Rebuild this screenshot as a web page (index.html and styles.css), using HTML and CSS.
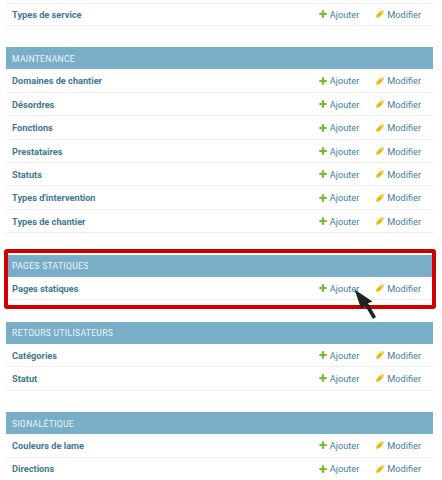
FILE: index.html
```
<!DOCTYPE html>
<html lang="fr">
<head>
<meta charset="utf-8">
<title>Administration</title>
<link rel="stylesheet" href="styles.css">
</head>
<body>
<svg class="defs" aria-hidden="true">
  <symbol id="add" viewBox="0 0 8 8"><path d="M2.9.3h2.2v2.6h2.6v2.2H5.1v2.6H2.9V5.1H.3V2.9h2.6z" fill="#70bf2b"/></symbol>
  <symbol id="edit" viewBox="0 0 8 8"><path d="M.2 7.8.6 5 4.6 1 7 3.4 3 7.4zM5.1.6Q6-.3 6.9.5L7.5 1.1Q8.3 2 7.4 2.9z" fill="#efb80b"/></symbol>
</svg>
<main class="apps" id="apps"></main>
<script src="app.js"></script>
</body>
</html>
```
FILE: styles.css
```
* { box-sizing: border-box; }
body {
  margin: 0;
  height: 480px;
  overflow: hidden;
  background: #fff;
  color: #447e9b;
  font: 9.2px/12px Roboto, sans-serif;
}
.defs { position: absolute; width: 0; height: 0; }
.apps { padding: 2.5px 9px 0 6.3px; }
.module { position: relative; margin-bottom: 21.6px; }
.module-title {
  height: 22px;
  margin: 0;
  padding: 5.4px 5.8px;
  background: #79aec8;
  color: #f0f6f9;
  font-size: 8.5px;
  font-weight: 400;
  letter-spacing: .33px;
  text-transform: uppercase;
}
.row {
  display: flex;
  align-items: center;
  height: 23.4px;
  padding: 1.4px 11.5px 0 5.8px;
  border-bottom: 1px solid #eee;
}
.first .row { border-top: 1px solid #eee; }
.name { flex: 1; font-weight: 700; color: #417893; }
.action { display: flex; align-items: center; }
.action svg { width: 8px; height: 8px; margin-right: 3px; position: relative; top: -.6px; }
.add { width: 57.5px; }
.edit { width: 45.2px; }
.highlight {
  position: absolute;
  inset: -6.3px -3px -8.3px -2px;
  border: 4px solid #cf0000;
  border-radius: 3px;
}
.pointer {
  position: absolute;
  left: 347.5px;
  top: 34px;
  width: 24px;
  height: 31px;
}
```
FILE: app.js
```
const modules = [
  ["", ["Types de service"]],
  ["Maintenance", ["Domaines de chantier", "Désordres", "Fonctions", "Prestataires", "Statuts", "Types d'intervention", "Types de chantier"]],
  ["Pages statiques", ["Pages statiques"]],
  ["Retours utilisateurs", ["Catégories", "Statut"]],
  ["Signalétique", ["Couleurs de lame", "Directions"]]
];
const action = (kind, label) =>
  `<a class="action ${kind}"><svg><use href="#${kind}"/></svg>${label}</a>`;
const overlay = `<div class="highlight"></div>
  <svg class="pointer" viewBox="0 0 24 31"><path d="M.5.5 18.5 12.5 14 14.3 22 28 19 30 11 16.5 7.2 20z" fill="#222"/></svg>`;
document.getElementById("apps").innerHTML = modules.map(([title, rows], i) =>
  `<section class="module${i ? "" : " first"}">
    ${title ? `<h2 class="module-title">${title}</h2>` : ""}
    ${rows.map(name => `<div class="row"><span class="name">${name}</span>${action("add", "Ajouter")}${action("edit", "Modifier")}</div>`).join("")}
    ${title === "Pages statiques" ? overlay : ""}
  </section>`).join("");
```
